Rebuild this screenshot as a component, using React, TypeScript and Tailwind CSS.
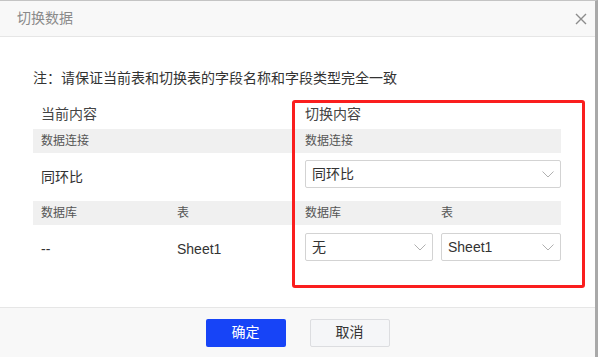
import React from "react";

const Chevron = () => (
  <svg width="12" height="7" viewBox="0 0 12 7" fill="none" className="shrink-0">
    <path d="M0.5 0.5 L6 6 L11.5 0.5" stroke="#b0b0b0" strokeWidth="1" />
  </svg>
);

const Select = ({ value, className = "" }: { value: string; className?: string }) => (
  <div
    className={`h-[28px] border border-[#d3d3d3] rounded-[2px] bg-white flex items-center justify-between pl-[6px] pr-[6px] text-[14px] text-[#333] ${className}`}
  >
    <span>{value}</span>
    <Chevron />
  </div>
);

export default function App() {
  return (
    <div
      className="w-[599px] h-[357px] bg-white relative overflow-hidden"
      style={{ fontFamily: '"Liberation Sans", "Noto Sans CJK SC", sans-serif' }}
    >
      <div className="w-[598px] h-full border-t border-t-[#c4c4c4] border-r-[3px] border-r-[#a9a9a9] flex flex-col">
        {/* header */}
        <div className="h-[36px] shrink-0 bg-[#f8f8f8] border-b border-b-[#e6e6e6] flex items-center justify-between pl-[17px] pr-[8px]">
          <span className="text-[14px] text-[#8a8a8a]">切换数据</span>
          <svg width="12" height="12" viewBox="0 0 12 12" className="mr-[0px]">
            <path d="M1 1 L11 11 M11 1 L1 11" stroke="#8c8c8c" strokeWidth="1.4" />
          </svg>
        </div>

        {/* body */}
        <div className="flex-1 px-[33px] pt-[31px]">
          <div className="h-[20px] leading-[20px] text-[14px] text-[#333]">
            注：请保证当前表和切换表的字段名称和字段类型完全一致
          </div>
          <div className="flex mt-[16px]">
            {/* left column */}
            <div className="w-[264px]">
              <div className="h-[20px] leading-[20px] pl-2 text-[14px] text-[#444]">当前内容</div>
              <div className="mt-[5px] h-[24px] bg-[#f0f0f0] pl-2 flex items-center text-[12px] text-[#555]">数据连接</div>
              <div className="h-[48px] flex items-center pl-2 text-[14px] text-[#333]">同环比</div>
              <div className="h-[24px] bg-[#f0f0f0] flex items-center text-[12px] text-[#555]">
                <div className="w-[136px] pl-2">数据库</div>
                <div className="pl-2">表</div>
              </div>
              <div className="h-[48px] flex items-center text-[14px] text-[#333]">
                <div className="w-[136px] pl-2">--</div>
                <div className="pl-2">Sheet1</div>
              </div>
            </div>
            {/* right column */}
            <div className="w-[264px]">
              <div className="h-[20px] leading-[20px] pl-2 text-[14px] text-[#444]">切换内容</div>
              <div className="mt-[5px] h-[24px] bg-[#f0f0f0] pl-2 flex items-center text-[12px] text-[#555]">数据连接</div>
              <div className="h-[48px] pt-[7px] pl-2">
                <Select value="同环比" />
              </div>
              <div className="h-[24px] bg-[#f0f0f0] flex items-center text-[12px] text-[#555]">
                <div className="w-[136px] pl-2">数据库</div>
                <div className="pl-2">表</div>
              </div>
              <div className="h-[48px] pt-[8px] flex">
                <div className="w-[136px] pl-2">
                  <Select value="无" />
                </div>
                <div className="flex-1 pl-2">
                  <Select value="Sheet1" />
                </div>
              </div>
            </div>
          </div>
        </div>

        {/* footer */}
        <div className="h-[50px] shrink-0 bg-[#f8f8f8] border-t border-t-[#e6e6e6] flex items-center justify-center gap-[24px]">
          <button className="w-[80px] h-[28px] rounded-[2px] bg-[#1744f7] text-white text-[14px]">确定</button>
          <button className="w-[80px] h-[28px] rounded-[2px] bg-[#f5f6f8] border border-[#dcdde0] text-[#333] text-[14px]">取消</button>
        </div>
      </div>

      {/* red annotation box */}
      <div className="absolute left-[292px] top-[100px] w-[293px] h-[188px] border-[3px] border-[#fa1e1e] rounded-[3px] pointer-events-none" />
    </div>
  );
}
